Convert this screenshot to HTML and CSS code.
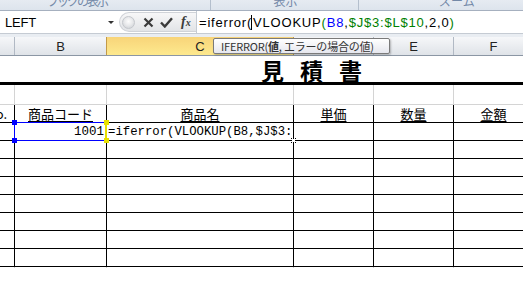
FILE: index.html
```html
<!DOCTYPE html>
<html lang="ja">
<head>
<meta charset="utf-8">
<link rel="stylesheet" href="styles.css">
</head>
<body>
<div class="ribbon">
  <div class="grp g1"><span>ブックの表示</span></div>
  <div class="grp g2"><span>表示</span></div>
  <div class="grp g3"><span>ズーム</span></div>
</div>
<div class="fbar">
  <div class="namebox"><span class="nm">LEFT</span><i class="dd"></i></div>
  <div class="btns">
    <span class="grip"></span>
    <svg class="ico" width="11" height="11" viewBox="0 0 11 11"><path d="M1.5 1.5 L9.5 9.5 M9.5 1.5 L1.5 9.5" stroke="#3a3a3a" stroke-width="2.2" fill="none"/></svg>
    <svg class="ico" width="13" height="11" viewBox="0 0 13 11"><path d="M1 5.5 L4.8 9.5 L12 1.2" stroke="#3a3a3a" stroke-width="2.4" fill="none"/></svg>
    <span class="fx">f<small>x</small></span>
  </div>
  <div class="formula">=iferror(<span class="cur"></span>VLOOKUP<span class="gr">(</span><span class="bl">B8</span>,<span class="gr">$J$3:$L$10</span>,2,0<span class="gr">)</span></div>
</div>
<div class="gap"></div>
<div class="sheet">
  <div class="row colhead">
    <div class="c"></div><div class="c">B</div><div class="c sel">C</div><div class="c"></div><div class="c">E</div><div class="c">F</div>
  </div>
  <div class="row title"><div class="ttl">見積書</div></div>
  <div class="row blank g">
    <div class="c"></div><div class="c"></div><div class="c"></div><div class="c"></div><div class="c"></div><div class="c"></div>
  </div>
  <div class="row hdr t">
    <div class="c a"><span>No.</span></div><div class="c"><u>商品コード</u></div><div class="c"><u>商品名</u></div><div class="c"><u>単価</u></div><div class="c"><u>数量</u></div><div class="c"><u>金額</u></div>
  </div>
  <div class="row t">
    <div class="c"></div><div class="c num">1001</div><div class="c edit">=iferror(VLOOKUP(B8,$J$3:</div><div class="c"></div><div class="c"></div><div class="c"></div>
  </div>
  <div class="row t"><div class="c"></div><div class="c"></div><div class="c"></div><div class="c"></div><div class="c"></div><div class="c"></div></div>
  <div class="row t"><div class="c"></div><div class="c"></div><div class="c"></div><div class="c"></div><div class="c"></div><div class="c"></div></div>
  <div class="row t"><div class="c"></div><div class="c"></div><div class="c"></div><div class="c"></div><div class="c"></div><div class="c"></div></div>
  <div class="row t"><div class="c"></div><div class="c"></div><div class="c"></div><div class="c"></div><div class="c"></div><div class="c"></div></div>
  <div class="row t"><div class="c"></div><div class="c"></div><div class="c"></div><div class="c"></div><div class="c"></div><div class="c"></div></div>
  <div class="row t"><div class="c"></div><div class="c"></div><div class="c"></div><div class="c"></div><div class="c"></div><div class="c"></div></div>
  <div class="row t"><div class="c"></div><div class="c"></div><div class="c"></div><div class="c"></div><div class="c"></div><div class="c"></div></div>
  <div class="row g"><div class="c"></div><div class="c"></div><div class="c"></div><div class="c"></div><div class="c"></div><div class="c"></div></div>
  <div class="row g last"><div class="c"></div><div class="c"></div><div class="c"></div><div class="c"></div><div class="c"></div><div class="c"></div></div>
</div>
<div class="refbox"><i class="h tl"></i><i class="h bl"></i><i class="h tr"></i><i class="h br"></i></div>
<i class="fillh"></i>
<div class="tip">IFERROR(<b>値</b>, エラーの場合の値)</div>
</body>
</html>
```
FILE: styles.css
```css
* { box-sizing: border-box; }
html, body { margin: 0; padding: 0; }
body {
  width: 523px; height: 286px; overflow: hidden; background: #fff;
  position: relative;
  font-family: "Noto Sans CJK JP", sans-serif;
}
.ribbon {
  height: 11px; display: flex; overflow: hidden;
  background: linear-gradient(#e6ebf2, #dde4ed);
  border-bottom: 1px solid #a6b0bf;
}
.grp {
  height: 10px; border-right: 1px solid #b4bfcd; overflow: hidden;
  font-size: 12px; line-height: 14px; color: #7489a8;
}
.grp span { display: block; margin-top: -6px; white-space: nowrap; }
.g1 { width: 211px; padding-left: 47px; letter-spacing: -2px; }
.g2 { width: 148px; text-align: center; padding-left: 2px; }
.g3 { flex: 1; padding-left: 80px; border-right: 0; }

.fbar {
  height: 23px; display: flex; align-items: stretch;
  background: #fff; border-bottom: 1px solid #c5cbd3;
}
.namebox {
  width: 119px; display: flex; align-items: center; position: relative;
  font-family: "Liberation Sans", Arial, sans-serif; font-size: 13px; color: #000;
  padding-left: 5px;
}
.nm { letter-spacing: -0.2px; }
.dd {
  position: absolute; left: 108px; top: 10px; width: 0; height: 0;
  border-left: 3px solid transparent; border-right: 3px solid transparent;
  border-top: 3px solid #333;
}
.btns {
  width: 77px; display: flex; align-items: center;
  margin: 1px 0; border-radius: 10px 0 0 10px;
  background: linear-gradient(#f7f7f8, #e2e4e7);
  border: 1px solid #d0d3d8; border-right: 0;
}
.grip {
  width: 13px; height: 13px; border-radius: 50%; margin-left: 2px;
  background: radial-gradient(circle at 50% 40%, #fdfdfd 0, #e9eaec 45%, #c9ccd1 100%);
  border: 1px solid #c4c7cc;
}
.ico { display: block; }
.btns .ico:nth-of-type(1) { margin-left: 8px; }
.btns .ico:nth-of-type(2) { margin-left: 6px; }
.fx {
  font-family: "Liberation Serif", serif; font-style: italic; font-weight: bold;
  font-size: 14px; color: #3a3a3a; margin-left: 8px; line-height: 1;
}
.fx small { font-size: 10px; }
.formula {
  flex: 1; display: flex; align-items: center; white-space: nowrap;
  border-left: 1px solid #c5cbd3; padding-left: 2px; padding-top: 1px;
  font-family: "Liberation Sans", Arial, sans-serif; font-size: 13px; letter-spacing: 0.8px; color: #000;
}
.cur { display: inline-block; width: 1px; height: 15px; background: #000; margin: 0 1px 0 -1px; }
.gr { color: #008000; }
.bl { color: #0000ff; }
.gap { height: 3px; background: #e9edf2; }

.sheet { display: flex; flex-direction: column; height: 231px; overflow: hidden; }
.row {
  display: grid; flex: none;
  grid-template-columns: 15px 92px 187px 80px 80px 80px;
  height: 18px; border-bottom: 1px solid #000;
}
.c { border-right: 1px solid #000; overflow: hidden; white-space: nowrap; }
.colhead {
  height: 19px; border-bottom: 1px solid #8b96a4;
  background: linear-gradient(#f6f7f9, #dfe3e8);
  font-family: "Liberation Sans", Arial, sans-serif; font-size: 13px; color: #222;
}
.colhead .c {
  border-right: 1px solid #b1b9c4; display: flex; align-items: center; justify-content: center;
  padding-top: 1px;
}
.colhead .sel {
  background: linear-gradient(#f8d479, #fde98e);
  border-right: 1px solid #c29a48; border-left: 1px solid #c29a48; margin-left: -1px;
}
.title {
  display: flex; height: 29px; border-bottom: 3px solid #000;
}
.ttl {
  padding-left: 261px; padding-top: 2px;
  font-size: 23px; font-weight: bold; line-height: 24px; letter-spacing: 16px;
}
.blank { height: 20px; }
.g { border-bottom-color: #d4d4d4; }
.g .c { border-right-color: #d4d4d4; }
.t .c, .g .c { font-size: 13px; line-height: 17px; }
.hdr .c { text-align: center; }
.hdr .c u { text-underline-offset: 2px; }
.hdr .a { display: flex; justify-content: flex-end; padding-right: 7px; }
.hdr .a span { flex: none; }
.num {
  text-align: right; padding-right: 2px;
  font-family: "Liberation Mono", monospace; font-size: 12.5px !important; line-height: 18px !important;
}
.edit {
  padding-left: 1px;
  font-family: "Liberation Mono", monospace; font-size: 12.3px !important; line-height: 18px !important;
}
.refbox {
  position: absolute; left: 14px; top: 122px; width: 93px; height: 19px;
  border: 1px solid #0000ff; border-right: 2px solid #e8e000;
}
.h { position: absolute; width: 5px; height: 5px; background: #0000ff; }
.h.tl { left: -3px; top: -3px; }
.h.bl { left: -3px; bottom: -3px; }
.h.tr { right: -4px; top: -3px; background: #e8e000; }
.h.br { right: -4px; bottom: -3px; background: #e8e000; }
.fillh {
  position: absolute; left: 291px; top: 138px; width: 5px; height: 5px;
  border: 1px dotted #000; background: #fff;
}
.tip {
  position: absolute; left: 213px; top: 38px; width: 177px; height: 16px;
  border: 1px solid #7a7a7a; border-radius: 2px;
  background: linear-gradient(#ffffff, #e6e7ee);
  box-shadow: 1px 1px 2px rgba(0,0,0,0.25);
  font-family: "Noto Sans CJK JP", sans-serif; font-size: 11px; line-height: 14px; color: #333;
  padding-left: 7px; white-space: nowrap; letter-spacing: -0.2px;
}
.tip b { font-weight: bold; }
```
